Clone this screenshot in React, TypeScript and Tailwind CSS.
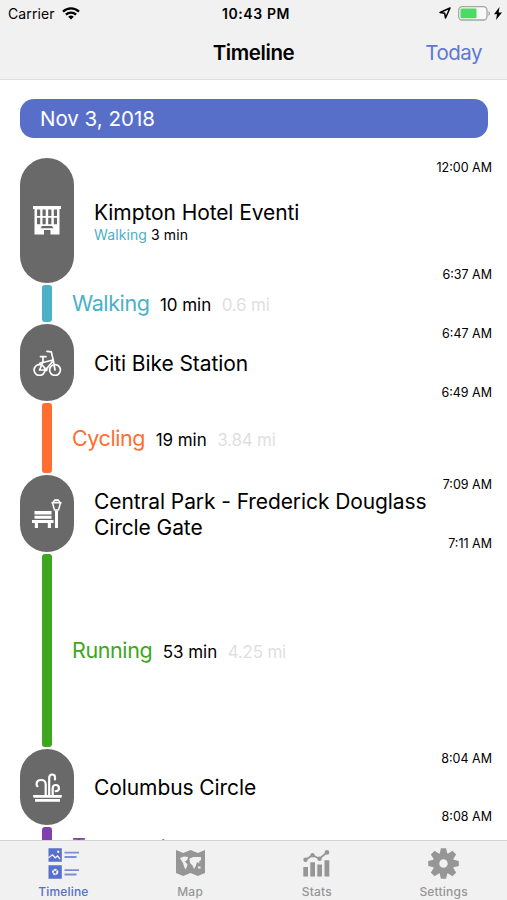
import type { ReactNode } from "react";
import clsx from "clsx";

type Place = {
  kind: "place";
  name: string;
  start: string;
  end: string;
  icon: ReactNode;
  height: string;
  note?: { activity: string; duration: string };
};

type Leg = {
  kind: "leg";
  activity: string;
  duration?: string;
  distance?: string;
  bar: string;
  text: string;
  height: string;
};

function HotelIcon() {
  return (
    <svg width="28" height="29" viewBox="0 0 28 29" fill="#fff">
      <path
        fillRule="evenodd"
        d="M0 0h28v3h-1.5v25.500H17.500V24h-6.500v4.500H1.500V3H0zM4 3.500v6.500h3.200V3.500zM9.500 3.500v6.500h3.200V3.500zM15.200 3.500v6.500h3.200V3.500zM20.800 3.500v6.500h3.200V3.500zM4 11.800v6.400h3.200v-6.400zM9.500 11.800v6.400h3.200v-6.400zM15.200 11.800v6.400h3.200v-6.400zM20.800 11.800v6.400h3.200v-6.400zM9 20l-1.500 2.200h13L19 20z"
      />
    </svg>
  );
}

function BikeIcon() {
  return (
    <svg width="29" height="27" viewBox="0 0 29 27" fill="none" stroke="#fff" strokeWidth="1.700" strokeLinecap="round" strokeLinejoin="round">
      <circle cx="6.500" cy="21" r="5.400" />
      <circle cx="22" cy="21" r="5.400" />
      <path d="M14 2.300l4.300.6L20 10l2 11M7.500 7.700h5.500M10 8v5L6.500 21h6L20 12M10 13.500l9.800-2.500M10 13l-3.500 1.500" />
      <circle cx="12.800" cy="20.500" r="1.100" />
    </svg>
  );
}

function BenchIcon() {
  return (
    <svg width="30" height="30" viewBox="0 0 30 30" fill="#fff">
      <path d="M2.500 12h17v3.500h-17zM2.500 16.700h17v3h-17zM0 21h21.500v3H19v5h-3.200v-5H6v5H2.800v-5H0z" />
      <path d="M23 11.500h3V29H23z" />
      <path d="M20.500 4L22.500 1.500h4L28.500 4l-2 7h-4z" fill="none" stroke="#fff" strokeWidth="1.500" />
      <path d="M22.300.3h4.400v1.500h-4.400zM19.500 3h10v1.500h-10z" />
    </svg>
  );
}

function FountainIcon() {
  return (
    <svg width="29" height="29" viewBox="0 0 29 29" fill="none">
      <path
        d="M12.700 22V11.500c0-3-2-4.500-4.600-4.500S3.600 8.500 3.600 11.200c0 .8.300 1.500.8 2M16.200 22V5.500c0-2.500 1.200-4 3-4S22 2.800 22 4.500v2M19.700 22v-6.500c0-2.200 1.200-3.500 3-3.500s3.200 1.300 3.200 3.200-1.300 3-3.200 3"
        stroke="#fff"
        strokeWidth="2.200"
        strokeLinecap="round"
      />
      <path d="M0 22h29l-.5 2.800H.5zM2 26h25v2.800H2z" fill="#fff" />
    </svg>
  );
}

const entries: (Place | Leg)[] = [
  {
    kind: "place",
    name: "Kimpton Hotel Eventi",
    start: "12:00 AM",
    end: "6:37 AM",
    icon: <HotelIcon />,
    height: "h-[125px]",
    note: { activity: "Walking", duration: "3 min" },
  },
  { kind: "leg", activity: "Walking", duration: "10 min", distance: "0.6 mi", bar: "bg-[#4bb0c8]", text: "text-[#4bb0c8]", height: "h-[41px]" },
  { kind: "place", name: "Citi Bike Station", start: "6:47 AM", end: "6:49 AM", icon: <BikeIcon />, height: "h-[77px]" },
  { kind: "leg", activity: "Cycling", duration: "19 min", distance: "3.84 mi", bar: "bg-[#ff6e30]", text: "text-[#ff6e30]", height: "h-[74px]" },
  {
    kind: "place",
    name: "Central Park - Frederick Douglass Circle Gate",
    start: "7:09 AM",
    end: "7:11 AM",
    icon: <BenchIcon />,
    height: "h-[77px]",
  },
  { kind: "leg", activity: "Running", duration: "53 min", distance: "4.25 mi", bar: "bg-[#3ea720]", text: "text-[#3ea720]", height: "h-[197px]" },
  { kind: "place", name: "Columbus Circle", start: "8:04 AM", end: "8:08 AM", icon: <FountainIcon />, height: "h-[76px]" },
  // runs on below the tab bar
  { kind: "leg", activity: "Transport", bar: "bg-[#8240ae]", text: "text-[#8240ae]", height: "h-[40px]" },
];

function PlaceRow({ place }: { place: Place }) {
  return (
    <div className={clsx("flex shrink-0", place.height)}>
      <div className="ml-5 flex w-[54px] shrink-0 items-center justify-center rounded-full bg-[#696969]">
        {place.icon}
      </div>
      <div className="ml-5 flex w-[340px] shrink-0 flex-col justify-center pt-[2px]">
        <p className="text-[21px] leading-[26px] tracking-[-0.09px]">{place.name}</p>
        {place.note ? (
          <p className="text-[14px] leading-[18px] tracking-[0.1px]">
            <span className="text-[#4bb0c8]">{place.note.activity}</span> {place.note.duration}
          </p>
        ) : null}
      </div>
      <div className="mr-[15px] -ml-5 flex flex-1 flex-col justify-between pt-px text-right text-[12.500px] leading-[18px] whitespace-nowrap">
        <span>{place.start}</span>
        <span className="-mb-px">{place.end}</span>
      </div>
    </div>
  );
}

function LegRow({ leg }: { leg: Leg }) {
  return (
    <div className={clsx("flex shrink-0 items-center", leg.height)}>
      <div className="ml-[42px] flex w-[10px] self-stretch py-[2px]">
        <div className={clsx("w-full rounded-[3px]", leg.bar)} />
      </div>
      <div className="ml-5 flex items-baseline gap-[10.500px] pt-[2px] text-[17px]">
        <span className={clsx("text-[21.500px] leading-[26px] tracking-[-0.4px]", leg.text)}>{leg.activity}</span>
        {leg.duration ? <span className="tracking-[-0.05px]">{leg.duration}</span> : null}
        {leg.distance ? <span className="tracking-[-0.2px] text-[#dfdfdf]">{leg.distance}</span> : null}
      </div>
    </div>
  );
}

function StatusBar() {
  return (
    <div className="grid h-7 grid-cols-3 items-center pr-[5px] pl-2 text-[14px]">
      <div className="flex items-center gap-[7px] pb-[2px]">
        <span className="tracking-[0.1px]">Carrier</span>
        <svg width="18" height="13" viewBox="0 0 18 13" fill="none" stroke="#000" strokeWidth="2.300">
          <path d="M1 4.600a11.500 11.500 0 0 1 16 0M3.900 7.700a7.400 7.400 0 0 1 10.200 0" />
          <path d="M9 12.500L6.200 9.800a4 4 0 0 1 5.600 0z" fill="#000" stroke="none" />
        </svg>
      </div>
      <div className="pb-[2px] pl-[2px] text-center font-semibold tracking-[0.6px] whitespace-nowrap">10:43 PM</div>
      <div className="flex items-center justify-end pb-[2px]">
        <svg width="12" height="12" viewBox="0 0 12 12" fill="none" stroke="#000" strokeWidth="1.500" strokeLinejoin="round">
          <path d="M11 1L1 5.500l4.700.8.800 4.700z" />
        </svg>
        <svg className="ml-[7px]" width="33" height="15" viewBox="0 0 33 15">
          <rect x=".7" y=".7" width="28.300" height="13.300" rx="3.500" fill="#f8f8f8" stroke="#a5a5a5" strokeWidth="1.300" />
          <rect x="2.500" y="2.500" width="16" height="9.800" rx="1" fill="#4cd964" />
          <path d="M30.500 5v5c2-.8 2-4.200 0-5z" fill="#a5a5a5" />
        </svg>
        <svg className="ml-[3px]" width="8" height="13" viewBox="0 0 8 13">
          <path d="M5.500 0L0 7.300h3L2 13l6-7.600H4.600z" />
        </svg>
      </div>
    </div>
  );
}

function TimelineIcon() {
  return (
    <svg width="31" height="31" viewBox="0 0 31 31">
      <path d="M.5.300h13.300v13.500H.5zM.5 17.300h13.300v13.500H.5z" fill="#5870cb" />
      <path d="M.5 9.800l4-3 2.700 3 2.300-1.800 2.500 3" fill="none" stroke="#f1f1f1" strokeWidth="1.300" />
      <circle cx="10.200" cy="3.700" r="1.200" fill="#f1f1f1" />
      <circle cx="7.200" cy="24" r="2.200" fill="none" stroke="#f1f1f1" strokeWidth="2" strokeDasharray="2.260 .5" />
      <path d="M16.500 4.700H31M16.500 9h12M16.500 22.200H31M16.500 26.500h12" stroke="#7b8ed6" strokeWidth="1.800" />
    </svg>
  );
}

function MapIcon() {
  return (
    <svg width="29" height="26" viewBox="0 0 29 26">
      <path d="M0 0l7.200 3 7.300-3 7.300 3L29 0v23l-7.200 3-7.300-3-7.300 3L0 23z" fill="#969696" />
      <path
        d="M4 8l4-1.500 4 .5-.5 2.500-2.500 2 2.500 3-.5 2-1.500 3-1.500-3-1-3.500L5 10zM13.500 8.500l4-1.500 7.500 0v3l-2 1.500.5 2-2.500-1.500-1 3.500-2 3.500-1.500-3.500-2.500-2.500zM22 16.500h2.500v2H22z"
        fill="#f1f1f1"
      />
    </svg>
  );
}

function StatsIcon() {
  return (
    <svg width="27" height="27" viewBox="0 0 27 27" fill="#969696">
      <path d="M.3 17h4.700v9.500H.3zM7.300 12.300H12v14.200H7.300zM14.300 14.500H19v12h-4.700zM21.500 10.300h4.800v16.200h-4.800z" />
      <path d="M2.500 9.800l7-4.500 7 3.500 7.500-6.500" fill="none" stroke="#969696" strokeWidth="1.800" />
      <circle cx="2.500" cy="9.800" r="2.200" />
      <circle cx="9.500" cy="5.300" r="2.200" />
      <circle cx="16.500" cy="8.800" r="2.200" />
      <circle cx="24" cy="2.400" r="2.300" />
    </svg>
  );
}

const teeth = [0, 45, 90, 135, 180, 225, 270, 315];

function SettingsIcon() {
  return (
    <svg width="31" height="31" viewBox="-15.500 -15.500 31 31">
      {teeth.map((deg) => (
        <path key={deg} d="M-4 -9L-2.600 -15.300H2.600L4 -9z" fill="#969696" transform={`rotate(${deg})`} />
      ))}
      <circle r="7.500" fill="none" stroke="#969696" strokeWidth="6.500" />
    </svg>
  );
}

const tabs = [
  { label: "Timeline", icon: <TimelineIcon />, active: true },
  { label: "Map", icon: <MapIcon />, active: false },
  { label: "Stats", icon: <StatsIcon />, active: false },
  { label: "Settings", icon: <SettingsIcon />, active: false },
];

export default function App() {
  return (
    <div className="flex h-[900px] w-[507px] flex-col overflow-hidden bg-white font-['Inter',sans-serif] text-black">
      <header className="h-20 shrink-0 border-b border-[#dedede] bg-[#f1f1f1]">
        <StatusBar />
        <div className="grid h-12 grid-cols-3 items-center pt-[2px] pr-[25px] pl-[25px]">
          <span />
          <h1 className="text-center text-[20.500px] font-semibold tracking-[-0.4px]">Timeline</h1>
          <button className="text-right text-[20.500px] tracking-[-0.5px] text-[#6078d0]">Today</button>
        </div>
      </header>

      <main className="min-h-0 flex-1 overflow-hidden">
        <div className="mt-[18.500px] mr-[19px] ml-5 flex h-[39px] items-center rounded-[14px] bg-[#586fca] pt-[2px] pl-5 text-[20.500px] text-white">
          Nov 3, 2018
        </div>
        <div className="mt-[20.500px] flex flex-col">
          {entries.map((entry, i) =>
            entry.kind === "place" ? <PlaceRow key={i} place={entry} /> : <LegRow key={i} leg={entry} />
          )}
        </div>
      </main>

      <nav className="grid h-[60px] shrink-0 grid-cols-4 border-t border-[#d3d3d3] bg-[#f1f1f1]">
        {tabs.map((tab) => (
          <button key={tab.label} className="flex flex-col items-center pt-[6px]">
            <span className="flex h-8 items-center justify-center">{tab.icon}</span>
            <span
              className={clsx(
                "mt-[5px] text-[12px] leading-[16px] font-medium tracking-[0.2px]",
                tab.active ? "text-[#586fca]" : "text-[#969696]"
              )}
            >
              {tab.label}
            </span>
          </button>
        ))}
      </nav>
    </div>
  );
}
